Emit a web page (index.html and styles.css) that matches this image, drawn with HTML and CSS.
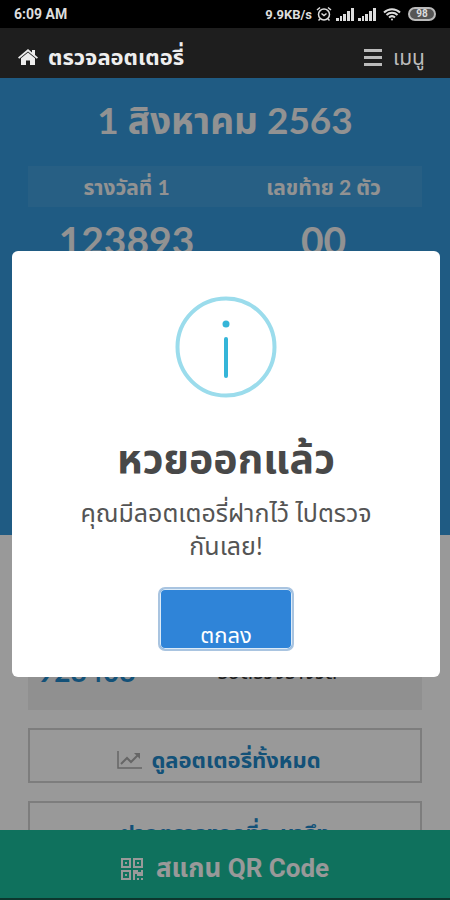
FILE: index.html
```html
<!DOCTYPE html>
<html lang="th">
<head>
  <meta charset="UTF-8" />
  <meta name="viewport" content="width=device-width, initial-scale=1" />
  <title>ตรวจลอตเตอรี่</title>
  <link rel="stylesheet" href="styles.css">
</head>
<body>

<div class="status-bar">
  <span>6:09 AM</span>
  <div class="status-icons">
    <span class="speed">9.9KB/s</span>
    <svg width="16" height="16" viewBox="0 0 16 16" fill="none" stroke="#ddd" stroke-width="1.5">
      <circle cx="8" cy="8.5" r="5.5"/>
      <path d="M5.5 7.5L8 9.5l2.500-2M1 4l3-2.500M15 4l-3-2.500M4 13l-1.500 1.500M12 13l1.500 1.500"/>
    </svg>
    <svg width="18" height="14" viewBox="0 0 18 14" fill="#ddd">
      <path d="M0 11h3v3H0zM4 9h2v5H4zM7 7h3v7H7zM11 4h3v10h-3zM15 1h3v13h-3z"/>
    </svg>
    <svg width="18" height="14" viewBox="0 0 18 14" fill="#ddd">
      <path d="M0 11h3v3H0zM4 9h2v5H4zM7 7h3v7H7zM11 4h3v10h-3zM15 1h3v13h-3z"/>
    </svg>
    <svg class="wifi" width="18" height="14" viewBox="0 0 18 14" fill="none" stroke="#ddd" stroke-width="2">
      <path d="M1 5.500a11.500 11.500 0 0 1 16 0M3.500 8a8 8 0 0 1 11 0M6 10.500a4.500 4.500 0 0 1 6 0"/>
      <circle cx="9" cy="12.500" r="1" fill="#ddd" stroke="none"/>
    </svg>
    <span class="battery">98</span>
  </div>
</div>

<div class="app">
  <header>
    <a class="brand" href="#">
      <svg width="20" height="17" viewBox="0 0 20 17" fill="currentColor">
        <path d="M10 0L0 8.500l1.200 1.300L10 2.500l8.800 7.300L20 8.500l-3-2.600V1h-3v2.400z"/>
        <path d="M10 3.500L3 9.300V16h5v-4.500h4V16h5V9.300z"/>
      </svg>
      ตรวจลอตเตอรี่
    </a>
    <button class="menu-btn" type="button">
      <svg width="20" height="17" viewBox="0 0 20 17" fill="currentColor">
        <path d="M1 0h18v3H1zM1 7h18v3H1zM1 14h18v3H1z"/>
      </svg>
      เมนู
    </button>
  </header>

  <main>
    <section class="result">
      <h1>1 สิงหาคม 2563</h1>
      <table>
        <thead>
          <tr>
            <th>รางวัลที่ 1</th>
            <th>เลขท้าย 2 ตัว</th>
          </tr>
        </thead>
        <tbody>
          <tr>
            <td>123893</td>
            <td>00</td>
          </tr>
        </tbody>
      </table>
    </section>

    <section class="saved">
      <div class="ticket">
        <span class="ticket-number">928408</span>
        <span class="ticket-status">รอตรวจรางวัล</span>
      </div>
      <a class="box-link with-icon" href="#">
        <svg width="25" height="20" viewBox="0 0 25 20" fill="none" stroke="#aaa" stroke-width="2">
          <path d="M1 1v17h24" stroke-width="1.5"/>
          <path d="M4 14l6-6 4 4 7-7"/>
          <path d="M17 3h6v6z" fill="#aaa" stroke="none"/>
        </svg>
        ดูลอตเตอรี่ทั้งหมด
      </a>
      <a class="box-link" href="#">ฝากตรวจงวดที่จะมาถึง</a>
    </section>
  </main>

  <button class="scan-btn" type="button">
    <svg width="22" height="22" viewBox="0 0 22 22" fill="currentColor">
      <path fill-rule="evenodd" d="M0 0h10v10H0zM2 2v6h6V2zM12 0h10v10H12zM14 2v6h6V2zM0 12h10v10H0zM2 14v6h6v-6z"/>
      <path d="M4 4h2v2H4zM16 4h2v2h-2zM4 16h2v2H4zM12 12h5v2h3v-2h2v6h-6v-2h-2v6h-2zM16 20h2v2h-2zM20 20h2v2h-2z"/>
    </svg>
    สแกน QR Code
  </button>

  <div class="overlay">
    <div class="modal" role="dialog" aria-labelledby="modalTitle">
      <svg class="modal-icon" width="102" height="102" viewBox="0 0 102 102">
        <circle cx="51" cy="51" r="48.500" fill="none" stroke="#9bdcec" stroke-width="4"/>
        <circle cx="51" cy="28" r="3.500" fill="#35b5d8"/>
        <path d="M51 43v37" stroke="#35b5d8" stroke-width="4" stroke-linecap="round"/>
      </svg>
      <h2 id="modalTitle">หวยออกแล้ว</h2>
      <p>คุณมีลอตเตอรี่ฝากไว้ ไปตรวจกันเลย!</p>
      <button class="ok-btn" type="button">ตกลง</button>
    </div>
  </div>
</div>

</body>
</html>
```

FILE: styles.css
```css
* {
  box-sizing: border-box;
}

body {
  margin: 0;
  height: 100vh;
  display: flex;
  flex-direction: column;
  overflow: hidden;
  background-color: white;
  font-family: Lato, "Noto Sans Thai", "Noto Sans", sans-serif;
}

button {
  border: none;
  font-family: inherit;
  cursor: pointer;
}

a {
  text-decoration: none;
}

.status-bar {
  background-color: black;
  color: #ddd;
  height: 28px;
  padding: 0 14px;
  display: flex;
  flex-shrink: 0;
  justify-content: space-between;
  align-items: center;
  font-family: Roboto, sans-serif;
  font-size: 14px;
  font-weight: bold;
}

.status-icons {
  display: flex;
  align-items: center;
  gap: 4px;
}

.speed {
  font-size: 13px;
}

.wifi {
  margin: 0 3px;
}

.battery {
  border: 2px solid #bbb;
  border-radius: 7px;
  background-color: #555;
  width: 28px;
  height: 14px;
  line-height: 10px;
  font-size: 10px;
  text-align: center;
}

.app {
  flex: 1;
  min-height: 0;
  position: relative;
  display: flex;
  flex-direction: column;
}

header {
  position: relative;
  z-index: 2;
  background-color: #1e1e1e;
  height: 50px;
  padding: 8px 25px 0 18px;
  display: flex;
  flex-shrink: 0;
  justify-content: space-between;
  align-items: center;
}

.brand, .menu-btn {
  display: flex;
  align-items: center;
  gap: 10px;
  line-height: 32px;
}

.brand {
  color: #eee;
  font-size: 22px;
  font-weight: bold;
}

.menu-btn {
  background: none;
  padding: 0;
  color: #bbb;
  font-size: 21px;
}

main {
  flex: 1;
  min-height: 0;
  overflow: hidden;
}

.result {
  background-color: #3498db;
  color: #f4f4f4;
  padding: 16px 28px 270px;
  text-align: center;
}

.result h1 {
  margin: 0 0 20px;
  font-size: 37px;
  line-height: 52px;
}

.result table {
  width: 100%;
  table-layout: fixed;
  border-collapse: collapse;
}

.result th {
  height: 41px;
  padding: 0;
  background-color: rgba(255, 255, 255, 0.07);
  font-size: 21px;
  line-height: 32px;
}

.result td {
  padding: 8px 0 0;
  font-size: 39px;
  line-height: 50px;
  font-weight: bold;
}

.saved {
  padding: 110px 28px 0;
}

.ticket {
  background-color: #f0f0f0;
  padding: 8px 10px;
  height: 65px;
  display: flex;
  align-items: flex-start;
}

.ticket-number, .ticket-status {
  line-height: 36px;
}

.ticket-number {
  width: 48%;
  color: #2187c8;
  font-size: 28px;
  font-weight: bold;
}

.ticket-status {
  color: #333;
  font-size: 21px;
}

.box-link {
  display: flex;
  justify-content: center;
  align-items: center;
  gap: 9px;
  height: 55px;
  margin-top: 18px;
  padding-top: 8px;
  border: 2px solid #d0d0d0;
  color: #2187c8;
  font-size: 22px;
  line-height: 32px;
  font-weight: bold;
}

.with-icon {
  padding-right: 12px;
}

.scan-btn {
  flex-shrink: 0;
  width: 100%;
  height: 70px;
  padding: 10px 0 0;
  display: flex;
  justify-content: center;
  align-items: center;
  gap: 13px;
  background-color: #1abc9c;
  border-bottom: 2px solid #145c4e;
  color: white;
  font-family: Roboto, "Noto Sans Thai", sans-serif;
  font-size: 26px;
  font-weight: bold;
}

.overlay {
  position: absolute;
  inset: 0;
  z-index: 1;
  display: flex;
  justify-content: center;
  align-items: center;
  padding: 0 10px 0 12px;
  background-color: rgba(0, 0, 0, 0.4);
}

.modal {
  width: 100%;
  padding: 45px 58px 26px;
  display: flex;
  flex-direction: column;
  align-items: center;
  background-color: white;
  border-radius: 6px;
  text-align: center;
}

.modal h2 {
  margin: 32px 0 10px;
  color: #484848;
  font-size: 41px;
  line-height: 56px;
}

.modal p {
  margin: 0 0 25px;
  color: #545454;
  font-size: 25px;
  line-height: 33px;
}

.ok-btn {
  width: 136px;
  height: 64px;
  padding: 30px 0 0;
  background-color: #2f84d8;
  border: 2px solid #a9c4e0;
  border-radius: 7px;
  box-shadow: inset 0 0 0 1px #dcebf8;
  color: white;
  font-size: 22px;
  line-height: 32px;
}
```
